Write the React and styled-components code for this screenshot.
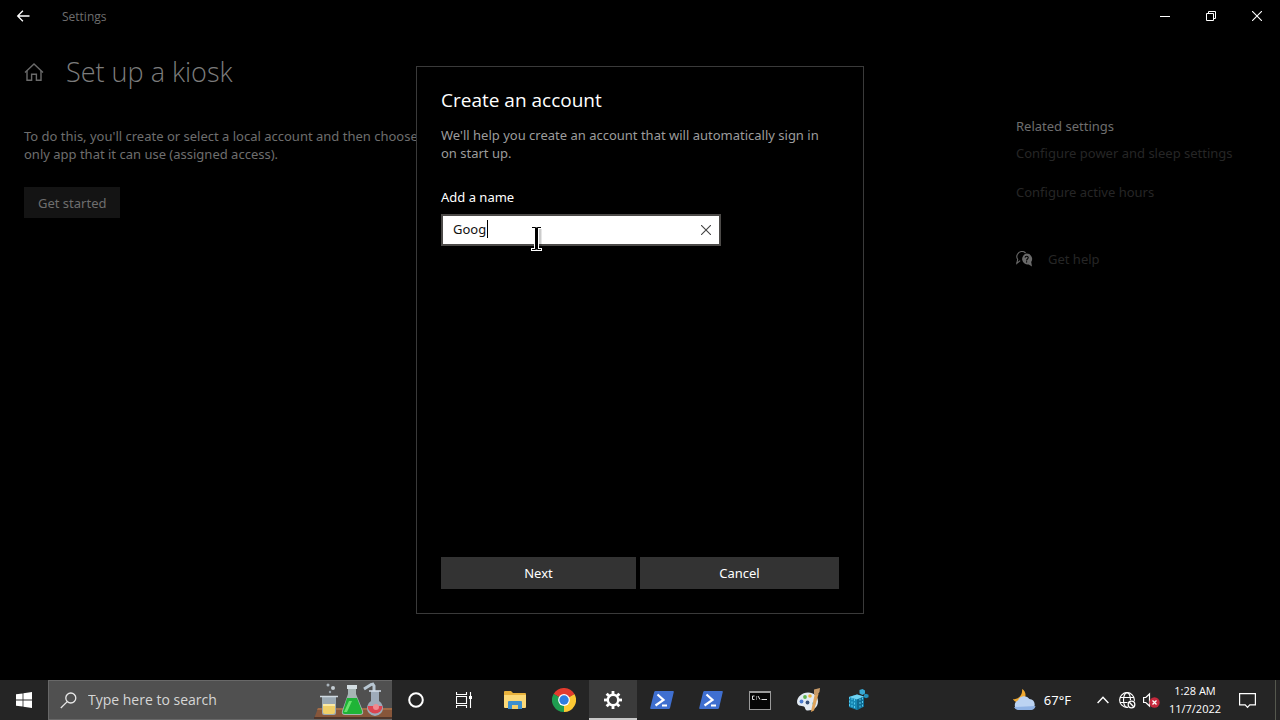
import React, { useState } from "react";
import styled, { createGlobalStyle, css } from "styled-components";

const GlobalStyle = createGlobalStyle`
  * {
    box-sizing: border-box;
  }
  body {
    margin: 0;
    background: #000;
    color: #fff;
    font-family: "Noto Sans", "Open Sans", sans-serif;
    font-size: 13px;
    line-height: 18px;
  }
  button, input {
    font: inherit;
    color: inherit;
  }
  h1, h2, h3, p {
    margin: 0;
    font-weight: 400;
  }
  svg {
    display: block;
    flex: none;
  }
`;

const BackIcon = () => (
  <svg width="14" height="12" viewBox="0 0 14 12" fill="none" stroke="#fff" strokeWidth="1.3">
    <path d="M13.500 6H1.700M6.900 .8L1.700 6l5.200 5.200" />
  </svg>
);

const MinimizeIcon = () => (
  <svg width="10" height="10" viewBox="0 0 10 10" stroke="#fff">
    <path d="M0 5.5h10" />
  </svg>
);

const RestoreIcon = () => (
  <svg width="10" height="10" viewBox="0 0 10 10" fill="none" stroke="#fff">
    <path d="M.5 2.5h7v7h-7zM2.5 2.5v-2h7v7h-2" />
  </svg>
);

const CloseIcon = ({ color = "#fff" }) => (
  <svg width="10" height="10" viewBox="0 0 10 10" fill="none" stroke={color} strokeWidth="1.1">
    <path d="M0 0l10 10M10 0L0 10" />
  </svg>
);

const HomeIcon = () => (
  <svg width="20" height="18" viewBox="0 0 20 18" fill="none" stroke="#6b6b6b" strokeWidth="1.4">
    <path d="M1 9.6L10 1l9 8.6" />
    <path d="M3 8v9.2h4.6v-6h4.8v6H17V8" />
  </svg>
);

const HelpIcon = () => (
  <svg width="17" height="16" viewBox="0 0 17 16" fill="none">
    <path d="M4.2 9.6L.8 12.4l.9-4.1A4.6 4.6 0 0 1 1.5 3.3 5 5 0 0 1 9.6 2" stroke="#6a6a6a" strokeWidth="1.1" />
    <path d="M10.6 2.6a5.4 5.4 0 0 1 4.6 8.4l.8 4.6-3.3-2.2A5.4 5.4 0 1 1 10.6 2.6z" fill="#6a6a6a" />
    <path d="M9 6.6c.2-2 3.3-1.8 3.2.1 0 1.3-1.6 1.3-1.6 2.7M10.6 10.3v1.200" stroke="#000" strokeWidth="1.1" />
  </svg>
);

const StartIcon = () => (
  <svg width="16" height="16" viewBox="0 0 16 16" fill="#fff">
    <path d="M0 2.3L6.6 1.4v6.2H0zM7.4 1.3L16 0v7.6H7.4zM0 8.4h6.6v6.2L0 13.7zM7.4 8.4H16V16l-8.6-1.3z" />
  </svg>
);

const SearchIcon = () => (
  <svg width="17" height="17" viewBox="0 0 17 17" fill="none" stroke="#e8e8e8" strokeWidth="1.3">
    <circle cx="10.8" cy="6" r="5" />
    <path d="M7.2 9.6L.8 16" />
  </svg>
);

const LabIcon = () => (
  <svg width="78" height="38" viewBox="0 0 78 38">
    <path d="M4 27h74v11H0z" fill="#87563a" />
    <path d="M4 27h74v2H3z" fill="#a26c47" />
    <path d="M0 36h78v2H0z" fill="#4f362b" />
    <circle cx="14" cy="4" r="1.5" fill="#a9b3bb" />
    <circle cx="19" cy="7" r="2" fill="#c3ccd3" />
    <circle cx="16" cy="11" r="1.2" fill="#98a3ac" />
    <path d="M8 15v17q0 2 2 2h10q2 0 2-2V15z" fill="#9aa8b2" />
    <path d="M9 24h12v7q0 2-2 2h-8q-2 0-2-2z" fill="#efcf68" />
    <path d="M9 23h12v2H9z" fill="#fbe9a4" />
    <path d="M6 15.500h18" stroke="#cfd9e0" strokeWidth="1.5" />
    <path d="M34 5h8v8l7 17q1 4-3 4H31q-4 0-3-4l6-17z" fill="#a7b5b5" />
    <path d="M33 17h10l5 13q1 3-2 3H31q-3 0-2-3z" fill="#1fb437" />
    <path d="M35 20h3l-5 11h-3z" fill="#6be36f" />
    <path d="M33 4h10v4H33z" fill="#d3dde2" />
    <path d="M50 8l8-5M58 2l2 3v8" stroke="#b8c6d2" strokeWidth="3" fill="none" />
    <path d="M57 10h8v10a8 8 0 1 1-8 0z" fill="#9eabba" />
    <path d="M53.500 25h15a7.500 7.500 0 1 1-15 0z" fill="#dc4450" />
    <circle cx="62" cy="26" r="3" fill="#f08a90" />
    <path d="M55 10h12" stroke="#d2dde8" strokeWidth="1.5" />
  </svg>
);

const CortanaIcon = () => (
  <svg width="16" height="16" viewBox="0 0 16 16" fill="none" stroke="#fff" strokeWidth="2">
    <circle cx="8" cy="8" r="6.8" />
  </svg>
);

const TaskViewIcon = () => (
  <svg width="16" height="16" viewBox="0 0 16 16" fill="none" stroke="#fff" strokeWidth="1.1">
    <path d="M.5 0v2.500h10V0M.5 16v-2.500h10V16M.5 4.500h10v7H.5zM14.500 0v16" />
    <path d="M13 4h3v3h-3z" fill="#fff" stroke="none" />
  </svg>
);

const ExplorerIcon = () => (
  <svg width="22" height="18" viewBox="0 0 22 18">
    <path d="M0 1q0-1 1-1h6l2 2h12q1 0 1 1v12H0z" fill="#e8b23c" />
    <path d="M0 4h22v12q0 1-1 1H1q-1 0-1-1z" fill="#fbd978" />
    <path d="M4 18v-7q0-1 1-1h12q1 0 1 1v7h-4v-4H8v4z" fill="#3d8fce" />
    <path d="M8 14h6v4H8z" fill="#f5cf68" />
  </svg>
);

const ChromeIcon = () => (
  <svg width="24" height="24" viewBox="0 0 24 24">
    <path d="M12 12L1.6 6A12 12 0 0 1 22.4 6z" fill="#e33b2e" />
    <path d="M12 12L22.4 6A12 12 0 0 1 12 24z" fill="#fcc934" />
    <path d="M12 12v12A12 12 0 0 1 1.6 6z" fill="#1f9d50" />
    <path d="M12 6h10.4L12 12z" fill="#e33b2e" />
    <path d="M17.2 15L12 24 12 12z" fill="#fcc934" />
    <path d="M6.8 15L1.6 6 12 12z" fill="#1f9d50" />
    <circle cx="12" cy="12" r="5.9" fill="#fff" />
    <circle cx="12" cy="12" r="4.7" fill="#2f7de1" />
  </svg>
);

const GearIcon = () => (
  <svg width="18" height="18" viewBox="0 0 18 18" fill="none" stroke="#fff">
    <circle cx="9" cy="9" r="5.2" strokeWidth="2.4" />
    {[0, 45, 90, 135, 180, 225, 270, 315].map((a) => (
      <path key={a} d="M9 0v3.500" strokeWidth="2.8" transform={`rotate(${a} 9 9)`} />
    ))}
  </svg>
);

const PowerShellIcon = () => (
  <svg width="24" height="18" viewBox="0 0 24 18" fill="none">
    <path d="M5.5 0H23q1 0 .8 1L20 17q-.3 1-1.3 1H1q-1 0-.8-1L4.200 1q.3-1 1.3-1z" fill="#3f6fd0" />
    <path d="M7.5 3.500l6 5.500-8 5.500M12 14.500h5" stroke="#fff" strokeWidth="2.2" />
  </svg>
);

const CmdIcon = () => (
  <svg width="22" height="19" viewBox="0 0 22 19" fill="none">
    <path d="M0 0h22v19H0z" fill="#9a9a9a" />
    <path d="M1 2h20v16H1z" fill="#050505" />
    <path d="M5.5 5h-2v3.500h2M7.5 5.500v1M7.5 7.500v1M9 5l2 3.500M12.500 8.500h5.500" stroke="#ddd" />
  </svg>
);

const PaintIcon = () => (
  <svg width="24" height="24" viewBox="0 0 24 24">
    <path d="M0 14C0 9 5 4.500 11 4.500c6 0 10 3.500 10 9 0 6-5 9-10 9-3 0-2.500-2-3.500-3.500S0 19 0 14z" fill="#e3ebf3" />
    <circle cx="4.5" cy="13.5" r="1.9" fill="#4a7bd0" />
    <circle cx="8" cy="9" r="1.9" fill="#5db34e" />
    <circle cx="13" cy="8" r="1.8" fill="#eeb33c" />
    <circle cx="10.5" cy="14.5" r="1.9" fill="#35507a" />
    <circle cx="17" cy="15.5" r="1.800" fill="#68c6db" />
    <path d="M18 5l3.500 1L17 22.500l-3 1.500 .5-3z" fill="#dfa45c" />
    <path d="M17 1.500l6-1.500-.5 4-2.500 3.500-3-1.500z" fill="#c79a68" />
  </svg>
);

const RegeditIcon = () => (
  <svg width="22" height="22" viewBox="0 0 22 22">
    <path d="M2 8l8-2.500 7 2v10L10 21l-8-3z" fill="#1687b3" />
    <path d="M2 8l8-2.500 7 2-7 3z" fill="#6fd3f2" />
    <path d="M10 10.500l7-3v10L10 21z" fill="#0f6a91" />
    <path d="M2.500 8v10M5 9v10M7.500 10v10M13 9.500v10M15.500 8.500v10" stroke="#52c8ee" strokeDasharray="2 1.500" fill="none" />
    <path d="M12.500 1l3-1 2.500 1.500v3L15.500 6l-3-1.500z" fill="#38a9d4" />
    <path d="M17 5.500l2-.8 2.500 1v2.500l-2.500 1-2-1z" fill="#238fba" />
  </svg>
);

const WeatherIcon = () => (
  <svg width="24" height="22" viewBox="0 0 24 22">
    <path d="M10 0c4 2 5 8 1 12-3 2-8 2-10-2 5 1 10-4 9-10z" fill="#f0a930" />
    <path d="M6.5 21a5 5 0 0 1-.5-9.500 6.500 6.500 0 0 1 11.500-1.500A5.6 5.6 0 0 1 18.500 21z" fill="#bcd3f2" />
    <path d="M2 18a5 5 0 0 0 4.500 3h12a5 5 0 0 0 5-4z" fill="#8fb2e4" />
  </svg>
);

const ChevronIcon = () => (
  <svg width="12" height="8" viewBox="0 0 12 8" fill="none" stroke="#fff" strokeWidth="1.4">
    <path d="M.6 7L6 1.2 11.4 7" />
  </svg>
);

const GlobeIcon = () => (
  <svg width="17" height="17" viewBox="0 0 17 17" fill="none" stroke="#fff" strokeWidth="1.1">
    <circle cx="8" cy="8" r="7.4" />
    <ellipse cx="8" cy="8" rx="3.5" ry="7.4" />
    <path d="M1 5.500h14M1 10.500h9" />
    <circle cx="12.5" cy="12.5" r="4.500" fill="#252525" stroke="none" />
    <circle cx="12.5" cy="12.5" r="3.3" strokeWidth="1.3" />
    <path d="M10.3 10.3l4.400 4.400" strokeWidth="1.3" />
  </svg>
);

const MutedIcon = () => (
  <svg width="17" height="16" viewBox="0 0 17 16" fill="none">
    <path d="M.6 5.500h2.200L6.500 2v12l-3.700-3.500H.6z" stroke="#fff" strokeWidth="1.2" />
    <circle cx="11.5" cy="10.5" r="5.2" fill="#c4283c" />
    <path d="M9.5 8.500l4 4M13.500 8.500l-4 4" stroke="#fff" strokeWidth="1.3" />
  </svg>
);

const ActionCenterIcon = () => (
  <svg width="17" height="17" viewBox="0 0 17 17" fill="none" stroke="#fff" strokeWidth="1.2">
    <path d="M.6 1.600h15.800v11.200h-5.600L8.500 15.400l-2.300-2.600H.6z" />
  </svg>
);

const PointerIcon = () => (
  <svg width="14" height="26" viewBox="0 0 14 26" fill="none">
    <path d="M9 2v18" stroke="#000" strokeOpacity=".2" strokeWidth="3" />
    <path d="M0 0h11v3H8v19h3v3H0v-3h3V3H0z" fill="#fff" />
    <path d="M1 1h3l1.500 .5L7 1h3v1H7v21h3v1H7l-1.500-.5L4 24H1v-1h3V2H1z" fill="#000" />
  </svg>
);

const apps = [
  { name: "File Explorer", Icon: ExplorerIcon },
  { name: "Google Chrome", Icon: ChromeIcon },
  { name: "Settings", Icon: GearIcon, active: true },
  { name: "Windows PowerShell", Icon: PowerShellIcon },
  { name: "Windows PowerShell", Icon: PowerShellIcon },
  { name: "Command Prompt", Icon: CmdIcon },
  { name: "Paint", Icon: PaintIcon },
  { name: "Registry Editor", Icon: RegeditIcon },
];

export default () => {
  const [name, setName] = useState("Goog");

  return (
    <Desktop>
      <GlobalStyle />
      <Window>
        <TitleBar>
          <TitleButton aria-label="Back">
            <BackIcon />
          </TitleButton>
          <WindowTitle>Settings</WindowTitle>
          <TitleButton aria-label="Minimize">
            <MinimizeIcon />
          </TitleButton>
          <TitleButton aria-label="Restore">
            <RestoreIcon />
          </TitleButton>
          <TitleButton aria-label="Close">
            <CloseIcon />
          </TitleButton>
        </TitleBar>
        <Content>
          <MainColumn>
            <PageHeader>
              <HomeIcon />
              <h1>Set up a kiosk</h1>
            </PageHeader>
            <Intro>
              To do this, you'll create or select a local account and then
              choose the only app that it can use (assigned access).
            </Intro>
            <StartButton>Get started</StartButton>
          </MainColumn>
          <Related>
            <h3>Related settings</h3>
            <RelatedLink href="#power">Configure power and sleep settings</RelatedLink>
            <RelatedLink href="#hours">Configure active hours</RelatedLink>
            <HelpRow>
              <HelpIcon />
              <RelatedLink href="#help">Get help</RelatedLink>
            </HelpRow>
          </Related>
        </Content>
        <Overlay>
          <Dialog role="dialog" aria-labelledby="dialog-title">
            <DialogTitle id="dialog-title">Create an account</DialogTitle>
            <DialogText>
              We'll help you create an account that will automatically sign in
              on start up.
            </DialogText>
            <Label htmlFor="name">Add a name</Label>
            <Field>
              <NameInput
                id="name"
                type="text"
                autoComplete="off"
                value={name}
                onChange={(e) => setName(e.target.value)}
              />
              <Caret />
              <ClearButton aria-label="Clear" onClick={() => setName("")}>
                <CloseIcon color="#444" />
              </ClearButton>
              <Pointer>
                <PointerIcon />
              </Pointer>
            </Field>
            <Actions>
              <DialogButton>Next</DialogButton>
              <DialogButton>Cancel</DialogButton>
            </Actions>
          </Dialog>
        </Overlay>
      </Window>
      <Taskbar>
        <TaskButton aria-label="Start">
          <StartIcon />
        </TaskButton>
        <SearchBox>
          <SearchIcon />
          <SearchInput type="text" aria-label="Search" placeholder="Type here to search" />
          <LabIcon />
        </SearchBox>
        <TaskButton aria-label="Cortana">
          <CortanaIcon />
        </TaskButton>
        <TaskButton aria-label="Task View">
          <TaskViewIcon />
        </TaskButton>
        <AppList>
          {apps.map(({ name, Icon, active }, idx) => (
            <TaskButton key={idx} aria-label={name} $active={active}>
              <Icon />
            </TaskButton>
          ))}
        </AppList>
        <Tray>
          <WeatherButton>
            <WeatherIcon />
            67°F
          </WeatherButton>
          <TrayButton aria-label="Show hidden icons">
            <ChevronIcon />
          </TrayButton>
          <TrayButton aria-label="Network">
            <GlobeIcon />
          </TrayButton>
          <TrayButton aria-label="Volume">
            <MutedIcon />
          </TrayButton>
          <Clock>
            <span>1:28 AM</span>
            <span>11/7/2022</span>
          </Clock>
          <NotifyButton aria-label="Notifications">
            <ActionCenterIcon />
          </NotifyButton>
          <ShowDesktop aria-label="Show desktop" />
        </Tray>
      </Taskbar>
    </Desktop>
  );
};

const Desktop = styled.div`
  display: flex;
  flex-direction: column;
  min-height: 100vh;
`;

const plainButton = css`
  display: flex;
  align-items: center;
  justify-content: center;
  padding: 0;
  border: 0;
  background: none;
`;

const Window = styled.div`
  position: relative;
  flex: 1;
  display: flex;
  flex-direction: column;
  color: #6e6e6e;
`;

const TitleBar = styled.header`
  display: flex;
  align-items: center;
  height: 32px;
`;

const TitleButton = styled.button`
  ${plainButton}
  width: 46px;
  height: 32px;
`;

const WindowTitle = styled.div`
  flex: 1;
  padding: 2px 0 0 16px;
  font-family: "Open Sans", sans-serif;
  font-size: 12px;
`;

const Content = styled.main`
  display: flex;
  justify-content: space-between;
  padding: 20px 24px;
`;

const MainColumn = styled.section`
  width: 440px;
`;

const PageHeader = styled.div`
  display: flex;
  align-items: center;
  gap: 22px;
  margin-bottom: 35px;
  & h1 {
    color: #7c7c7c;
    font-family: "Open Sans", sans-serif;
    font-size: 27px;
    font-weight: 300;
    line-height: 40px;
  }
`;

const Intro = styled.p`
  margin-bottom: 24px;
`;

const StartButton = styled.button`
  ${plainButton}
  height: 31px;
  padding: 0 14px;
  background: #141414;
`;

const Related = styled.aside`
  display: flex;
  flex-direction: column;
  align-items: flex-start;
  width: 240px;
  padding-top: 65px;
  & h3 {
    margin-bottom: 9px;
    font-size: 13px;
  }
`;

const RelatedLink = styled.a`
  margin-bottom: 21px;
  color: #262626;
  text-decoration: none;
`;

const HelpRow = styled.div`
  display: flex;
  align-items: center;
  gap: 15px;
  margin-top: 28px;
  & a {
    margin: 0;
  }
`;

const Overlay = styled.div`
  position: absolute;
  inset: 0;
  display: flex;
  align-items: center;
  justify-content: center;
`;

const Dialog = styled.section`
  display: flex;
  flex-direction: column;
  width: 448px;
  min-height: 548px;
  padding: 19px 24px 24px;
  border: 1px solid #3a3a3a;
  background: #000;
  color: #fff;
`;

const DialogTitle = styled.h2`
  margin-bottom: 12px;
  font-family: "Open Sans", sans-serif;
  font-size: 19px;
  line-height: 28px;
`;

const DialogText = styled.p`
  margin-bottom: 26px;
  padding-right: 12px;
  color: #9c9c9c;
`;

const Label = styled.label`
  margin-bottom: 8px;
`;

const Field = styled.div`
  position: relative;
  width: 280px;
  max-width: 100%;
`;

const NameInput = styled.input`
  display: block;
  width: 100%;
  height: 32px;
  padding: 0 32px 2px 10px;
  border: 2px solid #4c4a48;
  outline: none;
  background: #fff;
  color: #111;
`;

const Caret = styled.span`
  position: absolute;
  top: 6px;
  left: 46px;
  width: 1px;
  height: 18px;
  background: #000;
`;

const ClearButton = styled.button`
  ${plainButton}
  position: absolute;
  top: 2px;
  right: 1px;
  width: 28px;
  height: 28px;
`;

const Pointer = styled.span`
  position: absolute;
  top: 12px;
  left: 90px;
  pointer-events: none;
`;

const Actions = styled.div`
  display: flex;
  gap: 4px;
  margin-top: auto;
`;

const DialogButton = styled.button`
  ${plainButton}
  flex: 1;
  height: 32px;
  background: #333;
  &:first-child {
    flex: 0 1 195px;
  }
`;

const Taskbar = styled.footer`
  display: flex;
  height: 40px;
  background: #252525;
`;

const TaskButton = styled.button`
  ${plainButton}
  width: 48px;
  height: 40px;
  ${(props) =>
    props.$active &&
    css`
      background: #3b3b3b;
      box-shadow: inset 0 -2px #c8c8c8;
    `}
`;

const SearchBox = styled.div`
  display: flex;
  align-items: center;
  width: 344px;
  padding-left: 11px;
  border: 1px solid #686868;
  border-right: 0;
  background: #505050;
`;

const SearchInput = styled.input`
  flex: 1;
  min-width: 0;
  padding: 0 0 0 11px;
  border: 0;
  outline: none;
  background: none;
  font-family: "Open Sans", sans-serif;
  font-size: 14px;
  &::placeholder {
    color: #d6d6d6;
    opacity: 1;
  }
`;

const AppList = styled.nav`
  display: flex;
  gap: 1px;
  margin-left: 3px;
`;

const Tray = styled.div`
  display: flex;
  align-items: center;
  margin-left: auto;
`;

const WeatherButton = styled.button`
  ${plainButton}
  gap: 8px;
  height: 40px;
  margin-right: 20px;
`;

const TrayButton = styled.button`
  ${plainButton}
  width: 24px;
  height: 40px;
`;

const Clock = styled.time`
  display: flex;
  flex-direction: column;
  align-items: center;
  width: 64px;
  font-family: "Open Sans", sans-serif;
  font-size: 11px;
`;

const NotifyButton = styled.button`
  ${plainButton}
  width: 40px;
  height: 40px;
`;

const ShowDesktop = styled.button`
  ${plainButton}
  width: 5px;
  height: 40px;
  margin-left: 8px;
  border-left: 1px solid #55584e;
`;
